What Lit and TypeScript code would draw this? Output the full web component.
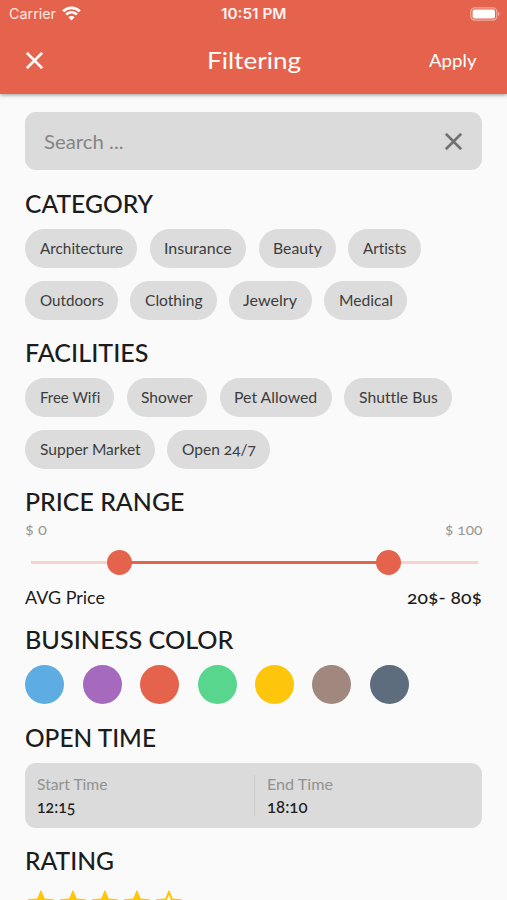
import { LitElement, html, css, svg } from "lit";
import { customElement, property, query } from "lit/decorators.js";

/** A single line of text stretched to a given advance width. */
@customElement("fit-text")
class FitText extends LitElement {
  @property() text = "";
  @property({ type: Number }) width = 0;
  @query(".line") line!: HTMLElement;

  static styles = css`
    :host { display: block; flex: none; white-space: pre; }
    .line { display: inline-block; transform-origin: 0 50%; }
  `;

  updated() {
    this.style.width = `${this.width}px`;
    this.line.style.transform = "none";
    const natural = this.line.getBoundingClientRect().width;
    if (natural > 0) this.line.style.transform = `scaleX(${this.width / natural})`;
  }

  render() {
    return html`<span class="line">${this.text}</span>`;
  }
}

type Label = [string, number];

const CATEGORIES: Label[] = [
  ["Architecture", 83.2], ["Insurance", 67.6], ["Beauty", 48.8], ["Artists", 43.4],
  ["Outdoors", 63.7], ["Clothing", 57.6], ["Jewelry", 54], ["Medical", 54],
];
const FACILITIES: Label[] = [
  ["Free Wifi", 60.3], ["Shower", 51.8], ["Pet Allowed", 83.2], ["Shuttle Bus", 78.7],
  ["Supper Market", 100.7], ["Open 24/7", 74],
];
const COLORS = ["#5dade2", "#a569bd", "#e5634d", "#58d68d", "#fdc60a", "#a1887f", "#5d6d7e"];

const STAR = "M12 17.27L18.18 21l-1.64-7.03L22 9.24l-7.19-.61L12 2 9.19 8.63 2 9.24l5.46 4.73L5.82 21z";
const STAR_OUTLINE =
  "M22 9.24l-7.19-.62L12 2 9.19 8.63 2 9.24l5.46 4.73L5.82 21 12 17.27 18.18 21l-1.63-7.03L22 9.24zM12 15.4l-3.76 2.27 1-4.28-3.32-2.88 4.38-.38L12 6.1l1.71 4.04 4.38.38-3.32 2.88 1 4.28L12 15.4z";
const CLOSE = "M19 6.41L17.59 5 12 10.59 6.41 5 5 6.41 10.59 12 5 17.59 6.41 19 12 13.41 17.59 19 19 17.59 13.41 12z";

const fit = (text: string, width: number, cls = "") =>
  html`<fit-text class=${cls} .text=${text} .width=${width}></fit-text>`;

@customElement("app-root")
class AppRoot extends LitElement {
  static styles = css`
    * { box-sizing: border-box; }
    :host {
      display: block;
      height: 900px;
      overflow: hidden;
      background: #fafafa;
      color: #1c1c1c;
      font-family: Lato, "Open Sans", sans-serif;
      font-variant-numeric: oldstyle-nums;
    }
    svg { display: block; flex: none; }
    header {
      height: 94px;
      background: #e5634d;
      color: #fff;
      box-shadow: 0 1px 4px rgba(0, 0, 0, 0.4);
    }
    .status {
      display: grid;
      grid-template-columns: 1fr auto 1fr;
      align-items: center;
      height: 27px;
      padding: 0 7px 0 9px;
      font: 400 14.5px/27px Inter, sans-serif;
      color: #ffe9e5;
    }
    .carrier { display: flex; align-items: center; gap: 6px; }
    .clock { font-weight: 600; color: #fff3f1; margin-left: -1px; }
    .battery { justify-self: end; }
    .bar {
      display: grid;
      grid-template-columns: 1fr auto 1fr;
      align-items: center;
      height: 66px;
      padding: 0 31px 0 20.4px;
    }
    .title { font-size: 24px; line-height: 30px; margin-left: 11px; }
    .apply { font-size: 17.3px; line-height: 30px; padding-top: 1px; justify-self: end; }
    main { padding: 18.3px 24.6px 0 25.4px; }
    .search {
      display: flex;
      align-items: center;
      justify-content: space-between;
      height: 58px;
      padding: 0 14.8px 0 18.2px;
      border-radius: 11px;
      background: #dbdbdb;
      color: #858585;
      font-size: 20px;
    }
    h2 {
      margin: 17.5px 0 11.4px;
      padding-top: 1px;
      height: 30px;
      font-size: 24px;
      line-height: 30px;
      font-weight: 500;
    }
    .chips { display: flex; flex-wrap: wrap; gap: 12.4px; }
    .chip {
      height: 39px;
      padding: 0 14.4px;
      border-radius: 20px;
      background: #dcdcdc;
      color: #3c3c3c;
      font-size: 15.4px;
      line-height: 39px;
      font-variant-ligatures: no-common-ligatures;
    }
    .row { display: flex; justify-content: space-between; }
    .limits { margin-top: -8.6px; height: 20px; font-size: 15px; line-height: 20px; color: #999; }
    .slider {
      display: grid;
      grid-template-columns: 89px 268.5px 90px;
      align-items: center;
      height: 26px;
      margin: 10.6px 0 9.9px 5.2px;
    }
    .seg { height: 3px; background: #f8d3cc; }
    .seg.on {
      z-index: 1;
      display: flex;
      align-items: center;
      justify-content: space-between;
      background: #e5634d;
    }
    .thumb { flex: none; width: 25px; height: 25px; border-radius: 50%; background: #e5634d; margin: 0 -12.5px; }
    .average { height: 22px; font-size: 17.3px; line-height: 23px; }
    .medium { font-weight: 500; }
    .average + h2 { margin-top: 16.2px; }
    .colors { display: flex; gap: 18.4px; }
    .dot { width: 39px; height: 39px; border-radius: 50%; }
    .times {
      display: grid;
      grid-template-columns: 1fr 1fr;
      align-items: center;
      height: 64.6px;
      border-radius: 11px;
      background: #dbdbdb;
    }
    .time { height: 41px; padding-left: 12px; }
    .time + .time { border-left: 1px solid #cccccc; }
    .label { font-size: 15.4px; line-height: 19px; color: #929292; }
    .value { font-size: 16.3px; line-height: 25px; font-weight: 500; }
    .stars { display: flex; fill: #fdc60a; }
  `;

  private chips(items: Label[]) {
    return html`<div class="chips">
      ${items.map(([t, w]) => html`<div class="chip">${fit(t, w)}</div>`)}
    </div>`;
  }

  private cross(size: number, color: string) {
    return html`<svg width=${size} height=${size} viewBox="0 0 24 24" fill=${color} stroke=${color} stroke-width="0.25"><path d=${CLOSE} /></svg>`;
  }

  render() {
    return html`
      <header>
        <div class="status">
          <div class="carrier">
            ${fit("Carrier", 47)}
            <svg width="19" height="15" viewBox="0 0 19 15" fill="none" stroke="#fff" stroke-width="2.7">
              <path d="M1.2 5.2a11.8 11.8 0 0 1 16.6 0M4.1 8.5a7.6 7.6 0 0 1 10.8 0" />
              <path d="M9.5 14.4l-3.1-3.1a4.4 4.4 0 0 1 6.2 0z" fill="#fff" stroke="none" />
            </svg>
          </div>
          ${fit("10:51 PM", 65.5, "clock")}
          <svg class="battery" width="30" height="14" viewBox="0 0 30 14">
            <rect x="0.8" y="0.8" width="26" height="12.4" rx="4" fill="none" stroke="#f2aca0" stroke-width="1.2" />
            <rect x="2.6" y="2.5" width="22.4" height="9" rx="2" fill="#fff" />
            <path d="M28.2 4.8c1.6.6 1.6 3.8 0 4.4z" fill="#f2aca0" />
          </svg>
        </div>
        <div class="bar">
          ${this.cross(29, "#fff")}
          ${fit("Filtering", 94, "title")}
          ${fit("Apply", 47.5, "apply")}
        </div>
      </header>
      <main>
        <div class="search">${fit("Search ...", 79.5)} ${this.cross(29, "#707070")}</div>
        <h2>${fit("CATEGORY", 128)}</h2>
        ${this.chips(CATEGORIES)}
        <h2>${fit("FACILITIES", 123.5)}</h2>
        ${this.chips(FACILITIES)}
        <h2>${fit("PRICE RANGE", 159.5)}</h2>
        <div class="row limits">${fit("$ 0", 22)} ${fit("$ 100", 37.5)}</div>
        <div class="slider">
          <div class="seg"></div>
          <div class="seg on"><div class="thumb"></div><div class="thumb"></div></div>
          <div class="seg"></div>
        </div>
        <div class="row average">${fit("AVG Price", 80)} ${fit("20$- 80$", 75, "medium")}</div>
        <h2>${fit("BUSINESS COLOR", 208.5)}</h2>
        <div class="colors">
          ${COLORS.map((c) => html`<div class="dot" style="background:${c}"></div>`)}
        </div>
        <h2>${fit("OPEN TIME", 131)}</h2>
        <div class="times">
          <div class="time">${fit("Start Time", 70.5, "label")}${fit("12:15", 38.5, "value")}</div>
          <div class="time">${fit("End Time", 66, "label")}${fit("18:10", 40.5, "value")}</div>
        </div>
        <h2>${fit("RATING", 89)}</h2>
        <div class="stars">
          ${[STAR, STAR, STAR, STAR, STAR_OUTLINE].map(
            (d) => html`<svg width="31.8" height="31.8" viewBox="0 0 24 24">${svg`<path d=${d} />`}</svg>`
          )}
        </div>
      </main>
    `;
  }
}
